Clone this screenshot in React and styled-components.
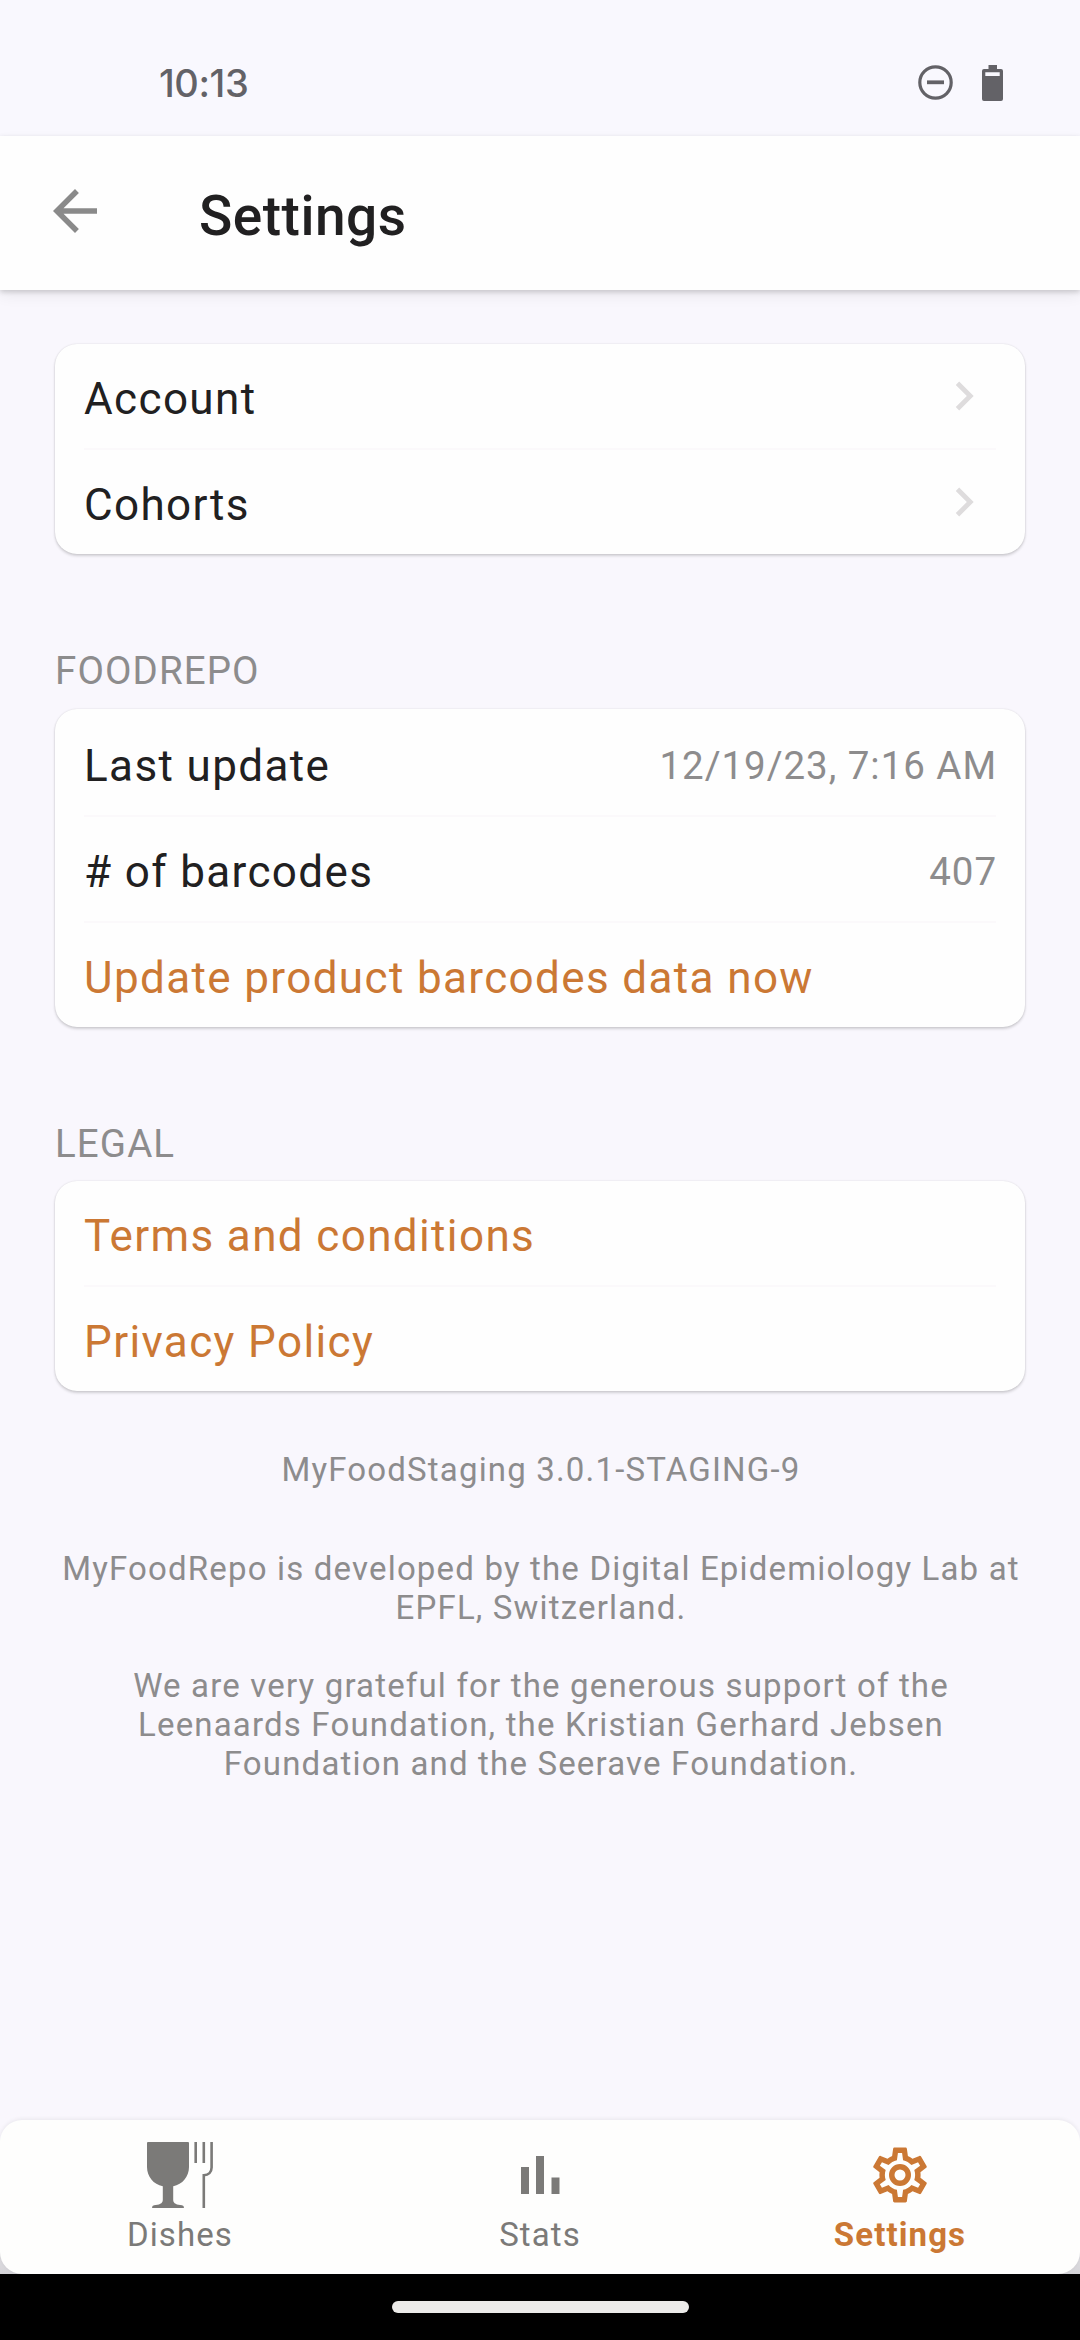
import React, { useState } from "react";
import styled, { createGlobalStyle } from "styled-components";

const links = ["Account", "Cohorts"];
const legal = ["Terms and conditions", "Privacy Policy"];
const COG =
  "M12,8A4,4 0 0,1 16,12A4,4 0 0,1 12,16A4,4 0 0,1 8,12A4,4 0 0,1 12,8M12,10A2,2 0 0,0 10,12A2,2 0 0,0 12,14A2,2 0 0,0 14,12A2,2 0 0,0 12,10M10,22C9.75,22 9.54,21.82 9.5,21.58L9.13,18.93C8.5,18.68 7.96,18.34 7.44,17.94L4.95,18.95C4.73,19.03 4.46,18.95 4.34,18.73L2.34,15.27C2.21,15.05 2.27,14.78 2.46,14.63L4.57,12.97L4.5,12L4.57,11L2.46,9.37C2.27,9.22 2.21,8.95 2.34,8.73L4.34,5.27C4.46,5.05 4.73,4.96 4.95,5.05L7.44,6.05C7.96,5.66 8.5,5.32 9.13,5.07L9.5,2.42C9.54,2.18 9.75,2 10,2H14C14.25,2 14.46,2.18 14.5,2.42L14.87,5.07C15.5,5.32 16.04,5.66 16.56,6.05L19.05,5.05C19.27,4.96 19.54,5.05 19.66,5.27L21.66,8.73C21.79,8.95 21.73,9.22 21.54,9.37L19.43,11L19.5,12L19.43,13L21.54,14.63C21.73,14.78 21.79,15.05 21.66,15.27L19.66,18.73C19.54,18.95 19.27,19.04 19.05,18.95L16.56,17.95C16.04,18.34 15.5,18.68 14.87,18.93L14.5,21.58C14.46,21.82 14.25,22 14,22H10M11.25,4L10.88,6.61C9.68,6.86 8.62,7.5 7.85,8.39L5.44,7.35L4.69,8.65L6.8,10.2C6.4,11.37 6.4,12.64 6.8,13.8L4.68,15.36L5.43,16.66L7.86,15.62C8.63,16.5 9.68,17.14 10.87,17.38L11.24,20H12.76L13.13,17.39C14.32,17.14 15.37,16.5 16.14,15.62L18.57,16.66L19.32,15.36L17.2,13.81C17.6,12.64 17.6,11.37 17.2,10.2L19.31,8.65L18.56,7.35L16.15,8.39C15.38,7.5 14.32,6.86 13.12,6.62L12.75,4H11.25Z";

const Chevron = () => (
  <svg width="58" height="58" viewBox="0 0 24 24" fill="#dedcdd">
    <path d="M10 6L8.59 7.41 13.17 12l-4.58 4.59L10 18l6-6z" />
  </svg>
);

const DishesIcon = () => (
  <svg width="66" height="66" viewBox="0 0 66 66">
    <path
      fill="currentColor"
      d="M1 0H41Q42 0 42 1V25C42 34.500 35.500 42.500 26.200 44.300V58C26.200 61.500 30 63 35 63.200Q37 63.500 37 66H5Q5 63.500 7 63.200C12 63 15.800 61.500 15.800 58V44.300C6.500 42.500 0 34.500 0 25V1Q0 0 1 0Z"
    />
    <g fill="none" stroke="currentColor" strokeWidth="2.6">
      <path d="M48.700 0V21M56.800 0V21" />
      <path d="M64.600 0V25.500C64.600 30 61.500 33 56.800 33.200V66" />
    </g>
  </svg>
);

const StatsIcon = () => (
  <svg width="66" height="66" viewBox="0 0 66 66" fill="currentColor">
    <path d="M14 25h8v27h-8zM29 14h8v38h-8zM44.500 35.500h8v16.500h-8z" />
  </svg>
);

const CogIcon = () => (
  <svg width="66" height="66" viewBox="0 0 24 24" fill="currentColor">
    <path d={COG} />
  </svg>
);

const tabs = [
  { name: "Dishes", icon: <DishesIcon /> },
  { name: "Stats", icon: <StatsIcon /> },
  { name: "Settings", icon: <CogIcon /> },
];

const App = () => {
  const [tab, setTab] = useState("Settings");

  return (
    <>
      <GlobalStyle />
      <Screen>
        <StatusBar>
          <Clock>10:13</Clock>
          <StatusIcons>
            <svg width="35" height="36" viewBox="0 0 35 36" fill="none" stroke="#636267">
              <circle cx="17.500" cy="17.500" r="15.700" strokeWidth="3.2" />
              <path d="M9 17.300H26" strokeWidth="3.800" />
            </svg>
            <svg width="21" height="36" viewBox="0 0 21 36" fill="#636267" fillRule="evenodd">
              <path d="M6.500 0H15V4H19Q21 4 21 6V34Q21 36 19 36H2Q0 36 0 34V6Q0 4 2 4H6.500ZM3.300 7.300V11H17.700V7.300Z" />
            </svg>
          </StatusIcons>
        </StatusBar>
        <Header>
          <Back aria-label="Back">
            <svg width="66" height="66" viewBox="0 0 24 24" fill="#8a8a8a">
              <path d="M20 11H7.830l5.590-5.590L12 4l-8 8 8 8 1.410-1.410L7.830 13H20v-2z" />
            </svg>
          </Back>
          <Title>Settings</Title>
        </Header>

        <Main>
          <Card>
            {links.map((name) => (
              <Row key={name}>
                <span>{name}</span>
                <Chevron />
              </Row>
            ))}
          </Card>

          <Label>FOODREPO</Label>
          <Card $top="2px">
            <Row>
              <span>Last update</span>
              <Value>12/19/23, 7:16 AM</Value>
            </Row>
            <Row>
              <span># of barcodes</span>
              <Value>407</Value>
            </Row>
            <Row $accent>
              <span>Update product barcodes data now</span>
            </Row>
          </Card>

          <Label>LEGAL</Label>
          <Card>
            {legal.map((name) => (
              <Row key={name} $accent>
                <span>{name}</span>
              </Row>
            ))}
          </Card>

          <About>
            <p>MyFoodStaging 3.0.1-STAGING-9</p>
            <p>
              MyFoodRepo is developed by the Digital Epidemiology Lab at
              <br />
              EPFL, Switzerland.
            </p>
            <p>
              We are very grateful for the generous support of the
              <br />
              Leenaards Foundation, the Kristian Gerhard Jebsen
              <br />
              Foundation and the Seerave Foundation.
            </p>
          </About>
        </Main>

        <TabWrap>
          <TabBar>
            {tabs.map(({ name, icon }) => (
              <Tab key={name} $active={tab === name} onClick={() => setTab(name)}>
                {icon}
                <span>{name}</span>
              </Tab>
            ))}
          </TabBar>
        </TabWrap>
        <GestureBar>
          <Handle />
        </GestureBar>
      </Screen>
    </>
  );
};

export default App;

const GlobalStyle = createGlobalStyle`
  *{
    box-sizing:border-box;
    margin:0;
    padding:0;
  }
  body{
    font-family:Roboto, sans-serif;
    background-color:#f9f7fd;
  }
  svg{
    display:block;
    flex-shrink:0;
  }
  button{
    font:inherit;
    border:none;
    background:none;
  }
`;

const Screen = styled.div`
  display:flex;
  flex-direction:column;
  width:1080px;
  height:2340px;
  overflow:hidden;
  background-color:#f9f7fd;
`;

const StatusBar = styled.div`
  display:flex;
  justify-content:space-between;
  height:136px;
  padding:65px 77px 0 159px;
  background-color:#f9f8fe;
`;

const Clock = styled.span`
  font-family:Inter, sans-serif;
  font-size:38px;
  line-height:36px;
  font-weight:500;
  letter-spacing:-.4px;
  color:#636267;
`;

const StatusIcons = styled.div`
  display:flex;
  gap:29px;
`;

const Header = styled.header`
  display:flex;
  align-items:center;
  flex-shrink:0;
  height:154px;
  padding-left:42px;
  background-color:#fefefe;
  box-shadow:0 2px 5px rgba(0,0,0,.17), 0 6px 14px rgba(0,0,0,.06);
`;

const Back = styled.button`
  margin-bottom:4px;
`;

const Title = styled.h1`
  margin:6px 0 0 91px;
  font-size:55px;
  line-height:64px;
  font-weight:500;
  letter-spacing:.5px;
  color:#212021;
`;

const Main = styled.main`
  flex:1;
  padding:54px 55px 0;
`;

const Card = styled.section`
  padding:${({ $top }) => $top || 0} 29px 0;
  border-radius:22px;
  background-color:#fefefe;
  box-shadow:0 2px 3px rgba(0,0,0,.16), 0 0 2px rgba(0,0,0,.12);
`;

const Row = styled.div`
  display:flex;
  align-items:center;
  justify-content:space-between;
  height:106px;
  padding-top:6px;
  border-bottom:2px solid #fbf9fb;
  font-size:44px;
  letter-spacing:1.375px;
  color:${({ $accent }) => ($accent ? "#cb7834" : "#212021")};

  &:last-child{
    height:104px;
    border:none;
  }
  svg{
    margin:0 3px 6px 0;
  }
`;

const Value = styled.span`
  font-size:38.5px;
  letter-spacing:.96px;
  margin-right:-1px;
  color:#8d8c8d;
`;

const Label = styled.h2`
  margin:94px 0 14.5px;
  font-size:38.5px;
  line-height:46px;
  font-weight:400;
  letter-spacing:1.1px;
  color:#8d8c8d;
`;

const About = styled.div`
  margin:59px -22px 0 -20px;
  font-size:33px;
  line-height:39px;
  letter-spacing:1.17px;
  text-align:center;
  color:#8d8c8d;

  p + p{
    margin-top:60px;
  }
  p + p + p{
    margin-top:39px;
  }
`;

// grey only shows behind the rounded bottom corners
const TabWrap = styled.div`
  background:linear-gradient(to bottom, transparent 50%, #d5d4d8 100%);
`;

const TabBar = styled.nav`
  display:flex;
  height:154px;
  border-radius:22px;
  background-color:#fefefd;
  box-shadow:0 -1px 4px rgba(0,0,0,.07);
`;

const Tab = styled.button`
  display:flex;
  flex:1;
  flex-direction:column;
  align-items:center;
  padding-top:22px;
  font-size:33px;
  line-height:39px;
  letter-spacing:1.1px;
  font-weight:${({ $active }) => ($active ? 700 : 400)};
  color:${({ $active }) => ($active ? "#cb7834" : "#7b7a78")};

  span{
    margin-top:7px;
  }
`;

const GestureBar = styled.div`
  display:flex;
  justify-content:center;
  flex-shrink:0;
  height:66px;
  padding-top:27px;
  background-color:#000;
`;

const Handle = styled.div`
  width:297px;
  height:12px;
  border-radius:6px;
  background-color:#ecebe9;
`;
